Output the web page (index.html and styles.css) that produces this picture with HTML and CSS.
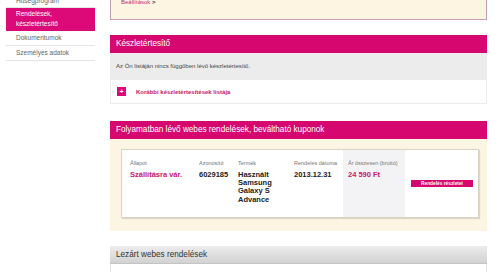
FILE: index.html
```html
<!DOCTYPE html>
<html lang="hu">
<head>
<meta charset="UTF-8">
<meta name="viewport" content="width=device-width, initial-scale=1.0">
<title>Rendelések, készletértesítő</title>
<link rel="stylesheet" href="styles.css">
</head>
<body>
  <div class="page">
    <!-- Left menu -->
    <ul class="side-menu">
      <li class="side-item">Hűségprogram</li>
      <li class="side-item active">Rendelések,<br>készletértesítő</li>
      <li class="side-item">Dokumentumok</li>
      <li class="side-item">Személyes adatok</li>
    </ul>

    <div class="main">
      <div class="notice">
        <a class="notice-link" href="#">Beállítások</a> <span class="notice-arrow">&gt;</span>
      </div>

      <!-- Stock notification -->
      <div class="panel">
        <div class="panel-header">Készletértesítő</div>
        <div class="panel-grey">Az Ön listáján nincs függőben lévő készletértesítő.</div>
        <div class="panel-row">
          <span class="plus-box">+</span>
          <a class="row-link" href="#">Korábbi készletértesítések listája</a>
        </div>
      </div>

      <!-- Active orders -->
      <div class="panel orders">
        <div class="panel-header">Folyamatban lévő webes rendelések, beváltható kuponok</div>
        <div class="panel-cream">
          <div class="order-card">
            <div class="cell cell-state">
              <div class="cell-label">Állapot</div>
              <div class="cell-value pink">Szállításra vár.</div>
            </div>
            <div class="cell cell-id">
              <div class="cell-label">Azonosító</div>
              <div class="cell-value">6029185</div>
            </div>
            <div class="cell cell-product">
              <div class="cell-label">Termék</div>
              <div class="cell-value">Használt Samsung Galaxy S Advance</div>
            </div>
            <div class="cell cell-date">
              <div class="cell-label">Rendelés dátuma</div>
              <div class="cell-value">2013.12.31</div>
            </div>
            <div class="cell cell-price">
              <div class="cell-label">Ár összesen (bruttó)</div>
              <div class="cell-value pink">24 590 Ft</div>
            </div>
            <div class="cell cell-action">
              <a class="details-button" href="#">Rendelés részletei</a>
            </div>
          </div>
        </div>
      </div>

      <!-- Closed orders -->
      <div class="panel">
        <div class="panel-header grey">Lezárt webes rendelések</div>
        <div class="panel-white"></div>
      </div>
    </div>
  </div>
</body>
</html>
```

FILE: styles.css
```css
body {
  margin: 0;
  font-family: "Liberation Sans", Arial, sans-serif;
  background: #fff;
  color: #333;
  overflow: hidden;
}
.page {
  display: flex;
  align-items: flex-start;
  margin-top: -6px;
}
.side-menu {
  list-style: none;
  margin: 0 0 0 6px;
  padding: 0;
  width: 89px;
}
.side-item {
  font-size: 6.5px;
  color: #666;
  height: 13px;
  line-height: 13px;
  padding-left: 10px;
  border-bottom: 1px solid #e4e4e4;
}
.side-item.active {
  background: #dc0a78;
  color: #fff;
  height: auto;
  line-height: 10px;
  padding: 1px 10px 2px;
  border-bottom: none;
}
.side-item.active + .side-item,
.side-item.active + .side-item ~ .side-item {
  height: 14px;
  line-height: 14px;
}
.main {
  width: 377px;
  margin-left: 15px;
}
.notice {
  height: 19px;
  padding: 4px 10px 2px;
  background: #fdf4e1;
  border: 1px solid #c89fb2;
  border-top: none;
  font-size: 6px;
  line-height: 8px;
}
.notice-link {
  color: #c2307a;
  text-decoration: none;
}
.notice-arrow {
  color: #333;
  font-weight: bold;
}
.panel {
  margin-top: 15px;
}
.panel.orders {
  margin-top: 17px;
}
.panel-header {
  background: #d6076f;
  color: #fff;
  font-size: 8.2px;
  height: 18px;
  line-height: 18px;
  padding-left: 6px;
}
.panel-header.grey {
  background: linear-gradient(#ececec, #d2d2d2);
  color: #333;
  border-bottom: 1px solid #c4c4c4;
  height: 17px;
}
.panel-grey {
  background: #ececec;
  font-size: 6px;
  color: #444;
  height: 27px;
  line-height: 27px;
  padding-left: 6px;
}
.panel-row {
  display: flex;
  align-items: center;
  height: 23px;
  padding-left: 6px;
  border: 1px solid #ececec;
  border-top: none;
}
.plus-box {
  width: 9px;
  height: 9px;
  background: #dc0a78;
  color: #fff;
  font-size: 7px;
  font-weight: bold;
  line-height: 9px;
  text-align: center;
}
.row-link {
  margin-left: 10px;
  color: #c8156f;
  font-size: 6px;
  font-weight: bold;
  text-decoration: none;
}
.panel-cream {
  background: #fdf5e3;
  padding: 10px 8px 13px 11px;
}
.order-card {
  display: flex;
  height: 69px;
  box-sizing: border-box;
  background: #fff;
  border: 1px solid #d9d2c2;
  box-shadow: 1px 1px 1px rgba(0, 0, 0, 0.12);
}
.cell {
  padding-top: 10px;
}
.cell-label {
  font-size: 5.5px;
  color: #777;
  line-height: 7px;
}
.cell-value {
  margin-top: 4px;
  font-size: 7.5px;
  font-weight: bold;
  color: #222;
  line-height: 8.2px;
}
.cell-value.pink {
  color: #c8156f;
}
.cell-state {
  width: 69px;
  padding-left: 8px;
}
.cell-id {
  width: 39px;
}
.cell-product {
  width: 50px;
  padding-right: 6px;
}
.cell-date {
  width: 49px;
}
.cell-price {
  width: 57px;
  padding-left: 5px;
  background: #f3f3f5;
}
.cell-action {
  flex: 1;
  display: flex;
  align-items: center;
  padding: 0 0 0 6px;
}
.details-button {
  display: block;
  width: 62px;
  height: 7px;
  background: #d6076f;
  color: #fff;
  font-size: 4.8px;
  font-weight: bold;
  line-height: 7px;
  text-align: center;
  text-decoration: none;
}
.panel-white {
  height: 20px;
  border: 1px solid #e2e2e2;
  border-top: none;
}
```
